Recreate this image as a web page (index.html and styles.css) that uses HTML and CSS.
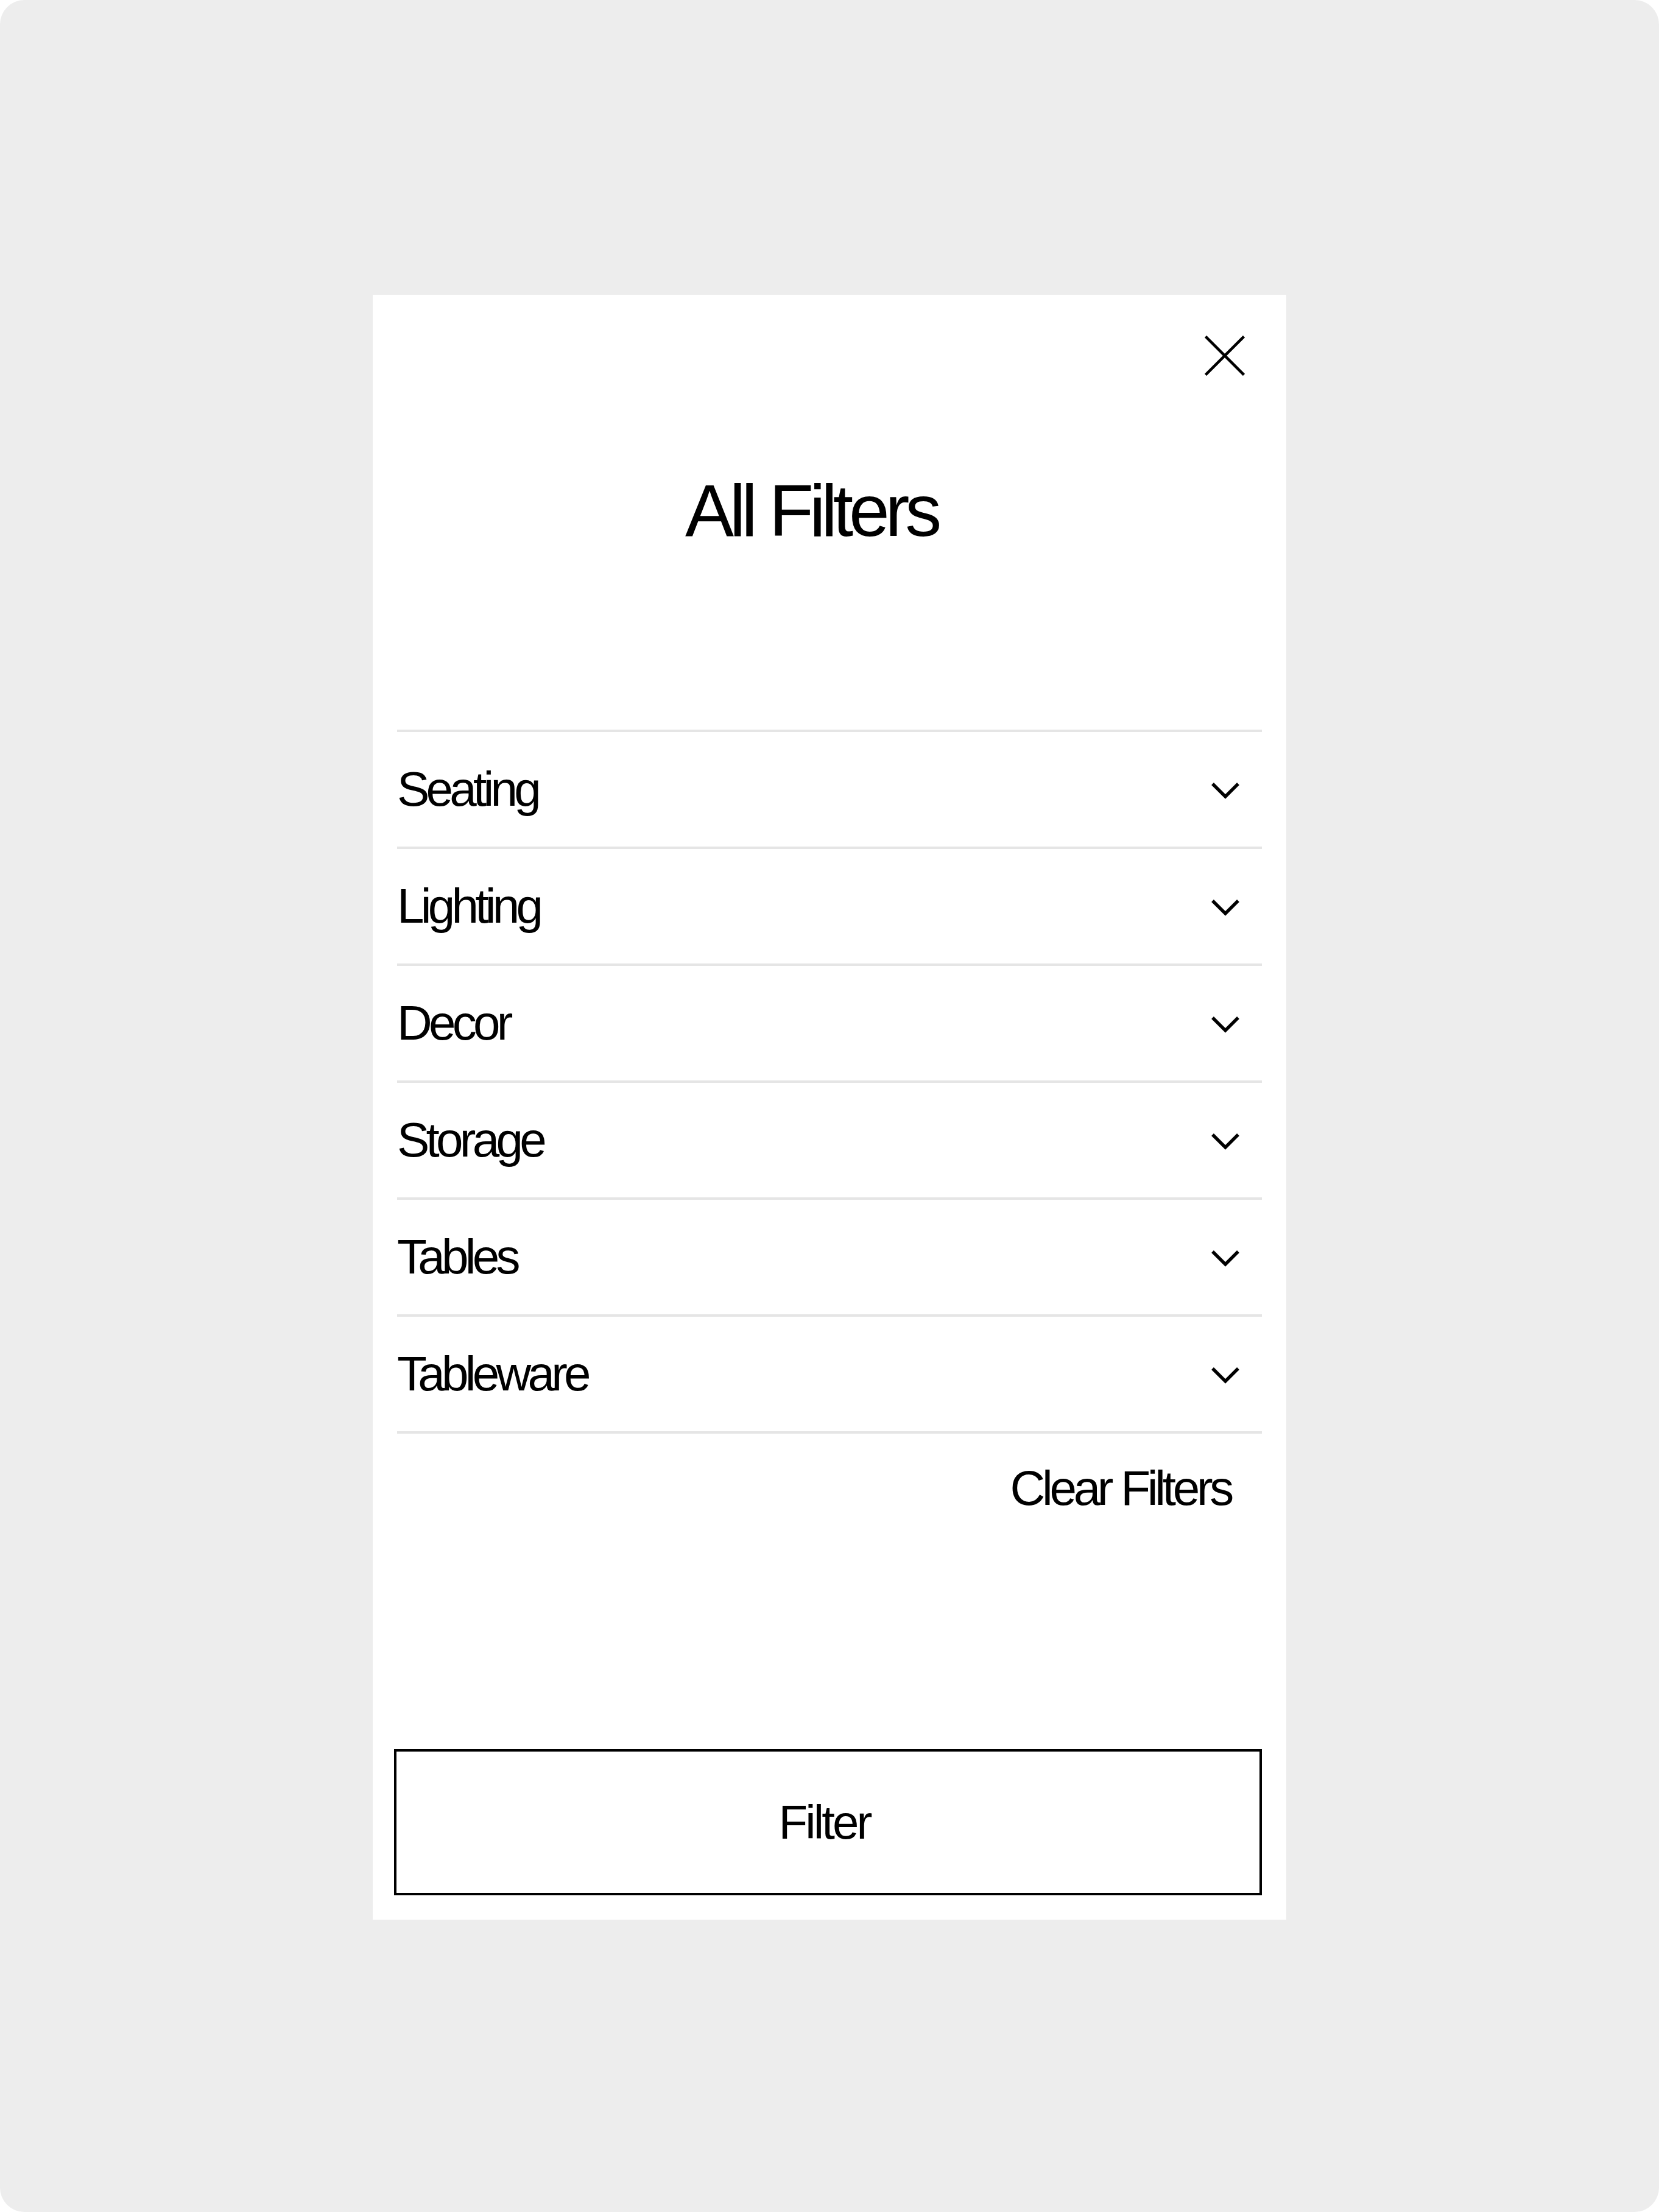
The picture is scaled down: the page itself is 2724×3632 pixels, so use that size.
FILE: index.html
```html
<!DOCTYPE html>
<html lang="en">
<head>
<meta charset="utf-8">
<title>All Filters</title>
<link rel="stylesheet" href="styles.css">
</head>
<body>
<div class="page">
  <div class="panel">
    <div class="panel-head">
      <button class="close" aria-label="Close">
        <svg width="66" height="66" viewBox="0 0 66 66"><path d="M1.5 1.5 L64.5 64.5 M64.5 1.5 L1.5 64.5" stroke="#000" stroke-width="4.5" fill="none"/></svg>
      </button>
    </div>
    <h1 class="title">All Filters</h1>
    <ul class="filters">
      <li class="row"><span class="label">Seating</span><svg class="chev" width="56" height="56" viewBox="0 0 56 56"><path d="M7 19 L28 40 L49 19" stroke="#000" stroke-width="5.4" fill="none"/></svg></li>
      <li class="row"><span class="label">Lighting</span><svg class="chev" width="56" height="56" viewBox="0 0 56 56"><path d="M7 19 L28 40 L49 19" stroke="#000" stroke-width="5.4" fill="none"/></svg></li>
      <li class="row"><span class="label">Decor</span><svg class="chev" width="56" height="56" viewBox="0 0 56 56"><path d="M7 19 L28 40 L49 19" stroke="#000" stroke-width="5.4" fill="none"/></svg></li>
      <li class="row"><span class="label">Storage</span><svg class="chev" width="56" height="56" viewBox="0 0 56 56"><path d="M7 19 L28 40 L49 19" stroke="#000" stroke-width="5.4" fill="none"/></svg></li>
      <li class="row"><span class="label">Tables</span><svg class="chev" width="56" height="56" viewBox="0 0 56 56"><path d="M7 19 L28 40 L49 19" stroke="#000" stroke-width="5.4" fill="none"/></svg></li>
      <li class="row"><span class="label">Tableware</span><svg class="chev" width="56" height="56" viewBox="0 0 56 56"><path d="M7 19 L28 40 L49 19" stroke="#000" stroke-width="5.4" fill="none"/></svg></li>
    </ul>
    <div class="clear">Clear Filters</div>
    <button class="filter-btn">Filter</button>
  </div>
</div>
</body>
</html>
```
FILE: styles.css
```css
* { box-sizing: border-box; }
html, body {
  margin: 0;
  padding: 0;
  background: #ffffff;
}
body {
  font-family: "Liberation Sans", Arial, Helvetica, sans-serif;
  color: #000;
}
.page {
  width: 2724px;
  height: 3632px;
  background: #ededed;
  border-radius: 40px;
  padding: 484px 0 0 612px;
  display: flex;
  align-items: flex-start;
}
.panel {
  width: 1500px;
  height: 2668px;
  background: #ffffff;
  padding: 0 40px 40px 40px;
  display: flex;
  flex-direction: column;
}
.panel-head {
  display: flex;
  justify-content: flex-end;
  padding-top: 67px;
  padding-right: 28px;
}
.close {
  border: 0;
  background: none;
  padding: 0;
  margin: 0;
  width: 66px;
  height: 66px;
  display: block;
}
.close svg { display: block; }
.title {
  margin: 161px 0 0 0;
  padding-right: 60px;
  font-size: 120px;
  line-height: 120px;
  font-weight: 400;
  letter-spacing: -0.06em;
  text-align: center;
}
.filters {
  list-style: none;
  margin: 300px 0 0 0;
  padding: 0;
  border-bottom: 4px solid #e5e5e5;
}
.row {
  height: 192px;
  border-top: 4px solid #e5e5e5;
  display: flex;
  align-items: center;
  justify-content: space-between;
}
.label {
  font-size: 80px;
  line-height: 80px;
  letter-spacing: -0.072em;
}
.chev {
  display: block;
  margin-right: 32px;
}
.clear {
  margin-top: 50px;
  font-size: 80px;
  line-height: 80px;
  letter-spacing: -0.066em;
  text-align: right;
  padding-right: 51px;
}
.filter-btn {
  margin: auto 0 0 -5px;
  height: 240px;
  border: 4px solid #000;
  background: #fff;
  font-family: "Liberation Sans", Arial, Helvetica, sans-serif;
  font-size: 78px;
  letter-spacing: -0.05em;
  color: #000;
  padding: 0 12px 0 0;
}
```
